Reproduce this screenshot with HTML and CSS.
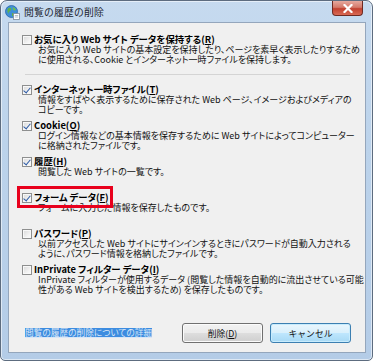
FILE: index.html
```html
<!DOCTYPE html>
<html lang="ja">
<head>
    <meta charset="UTF-8">
    <title>閲覧の履歴の削除</title>
    <link rel="stylesheet" href="styles.css">
</head>
<body>
    <div class="window">
        <div class="titlebar">
            <svg class="app-icon" width="15" height="15" viewBox="0 0 15 15">
                <circle cx="6.5" cy="6.5" r="6" fill="#3f8fd8" stroke="#2866a8" stroke-width="0.8"/>
                <path d="M2.5 4 Q4 2 6 3 Q7 5 5 6 Q3 7 3.5 9 Q2 7 2.5 4Z" fill="#5fb34a"/>
                <path d="M7.5 2 Q10 2.5 11 5 Q9 6 8 4.5Z" fill="#6cc04f"/>
                <path d="M7 8 Q9 7.5 10 9.5 Q8.5 11.5 7 11Z" fill="#5fb34a"/>
                <rect x="8.5" y="8.5" width="6" height="6" fill="#fff" stroke="#7d8a99" stroke-width="0.8"/>
                <path d="M9.8 10.5h3.4M9.8 12h3.4" stroke="#9aa7b5" stroke-width="0.7"/>
            </svg>
            <span class="title">閲覧の履歴の削除</span>
            <div class="close">
                <svg width="10" height="9" viewBox="0 0 10 9">
                    <path d="M1.5 1 L8.5 8 M8.5 1 L1.5 8" stroke="#fff" stroke-width="2.2" stroke-linecap="square"/>
                </svg>
            </div>
        </div>

        <div class="panel">
            <div class="options">
                <div class="option first">
                    <div class="opt-head"><span class="box"></span><span class="label">お気に入り Web サイト データを保持する(<u>R</u>)</span></div>
                    <div class="desc">お気に入り Web サイトの基本設定を保持したり、ページを素早く表示したりするため<br>に使用される、Cookie とインターネット一時ファイルを保持します。</div>
                </div>
                <div class="sep"></div>
                <div class="option">
                    <div class="opt-head"><span class="box checked"></span><span class="label">インターネット一時ファイル(<u>T</u>)</span></div>
                    <div class="desc">情報をすばやく表示するために保存された Web ページ、イメージおよびメディアの<br>コピーです。</div>
                </div>
                <div class="option">
                    <div class="opt-head"><span class="box checked"></span><span class="label">Cookie(<u>O</u>)</span></div>
                    <div class="desc">ログイン情報などの基本情報を保存するために Web サイトによってコンピューター<br>に格納されたファイルです。</div>
                </div>
                <div class="option">
                    <div class="opt-head"><span class="box checked"></span><span class="label">履歴(<u>H</u>)</span></div>
                    <div class="desc">閲覧した Web サイトの一覧です。</div>
                </div>
                <div class="option">
                    <div class="opt-head"><span class="box checked"></span><span class="label">フォーム データ(<u>F</u>)</span></div>
                    <div class="desc">フォームに入力した情報を保存したものです。</div>
                    <div class="marker"></div>
                </div>
                <div class="option">
                    <div class="opt-head"><span class="box"></span><span class="label">パスワード(<u>P</u>)</span></div>
                    <div class="desc">以前アクセスした Web サイトにサインインするときにパスワードが自動入力される<br>ように、パスワード情報を格納したファイルです。</div>
                </div>
                <div class="option">
                    <div class="opt-head"><span class="box"></span><span class="label">InPrivate フィルター データ(<u>I</u>)</span></div>
                    <div class="desc">InPrivate フィルターが使用するデータ (閲覧した情報を自動的に流出させている可能<br>性がある Web サイトを検出するため) を保存したものです。</div>
                </div>
            </div>

            <div class="footer">
                <a class="more" href="#">閲覧の履歴の削除についての詳細</a>
                <button class="btn">削除(<u>D</u>)</button>
                <button class="btn primary">キャンセル</button>
            </div>
        </div>
    </div>
</body>
</html>
```

FILE: styles.css
```css
html, body {
    margin: 0;
    padding: 0;
}
body {
    width: 373px;
    height: 361px;
    overflow: hidden;
    font-family: "Noto Sans CJK JP", "DejaVu Sans", sans-serif;
    color: #000;
}
.window {
    box-sizing: border-box;
    width: 373px;
    height: 361px;
    border: 1px solid #5d6c7f;
    border-radius: 7px 7px 5px 5px;
    background: linear-gradient(180deg, #c6daef 0%, #bcd3eb 40%, #b4cce7 100%);
    box-shadow: inset 0 0 0 1px rgba(255,255,255,0.55);
    display: flex;
    flex-direction: column;
}
.titlebar {
    height: 21px;
    display: flex;
    align-items: center;
    padding-left: 4px;
}
.app-icon {
    margin-top: 1px;
}
.title {
    margin-left: 4px;
    font-size: 9.8px;
    color: #1b2430;
    letter-spacing: 0.2px;
}
.close {
    margin-left: auto;
    margin-right: 9px;
    align-self: flex-start;
    width: 31px;
    height: 15px;
    box-sizing: border-box;
    border: 1px solid #6e2a22;
    border-top: none;
    border-radius: 0 0 4px 4px;
    background: linear-gradient(180deg, #e6a99e 0%, #d47a6b 45%, #c2402f 55%, #d86a55 100%);
    display: flex;
    align-items: center;
    justify-content: center;
}
.panel {
    margin: 0 6px 7px 7px;
    flex: 1;
    background: #f0f0f0;
    border: 1px solid #94a6bc;
    display: flex;
    flex-direction: column;
}
.options {
    padding: 11px 0 0 13px;
}
.option {
    position: relative;
    margin-bottom: 5px;
}
.option.first {
    margin-bottom: 0;
}
.opt-head {
    display: flex;
    align-items: center;
    height: 11px;
}
.box {
    box-sizing: border-box;
    width: 10px;
    height: 10px;
    border: 1px solid #8e8f8f;
    background: linear-gradient(135deg, #d9d9d9 0%, #f4f4f4 70%, #fbfbfb 100%);
    box-shadow: inset 0 0 0 1px #f8f8f8;
    margin-right: 2px;
    flex: none;
    position: relative;
}
.box.checked::after {
    content: "";
    position: absolute;
    left: 2px;
    top: 0px;
    width: 3px;
    height: 6px;
    border: solid #2d5ba6;
    border-width: 0 1.5px 1.5px 0;
    transform: rotate(40deg);
}
.label {
    font-size: 9.4px;
    font-weight: bold;
    line-height: 11px;
    white-space: nowrap;
    font-feature-settings: "palt";
}
.desc {
    padding-left: 16px;
    font-size: 9px;
    line-height: 10px;
    min-height: 20px;
    white-space: nowrap;
    font-feature-settings: "palt";
    color: #111;
}
.sep {
    height: 1px;
    background: #d4d4d4;
    margin: 9px 15px 9px 3px;
}
.marker {
    position: absolute;
    left: -5px;
    top: -6px;
    width: 90px;
    height: 16px;
    border: 3px solid #e8001c;
}
.footer {
    margin-top: auto;
    display: flex;
    align-items: center;
    gap: 7px;
    padding: 0 14px 9px 16px;
}
.more {
    font-size: 8.7px;
    line-height: 10px;
    color: #d8e6f7;
    background: #3d8ce0;
    text-decoration: underline;
    white-space: nowrap;
    margin-right: auto;
    font-feature-settings: "palt";
}
.btn {
    width: 81px;
    height: 20px;
    padding: 0;
    font-family: inherit;
    font-size: 8.8px;
    color: #111;
    border: 1px solid #707070;
    border-radius: 3px;
    background: linear-gradient(180deg, #f2f2f2 0%, #ebebeb 48%, #dddddd 52%, #cfcfcf 100%);
    box-shadow: inset 0 0 0 1px #fbfbfb;
}
.btn.primary {
    border-color: #3c7fb1;
    background: linear-gradient(180deg, #eaf6fd 0%, #d9f0fc 48%, #bee6fd 52%, #a7d9f5 100%);
    box-shadow: inset 0 0 0 1px #c8ecfd;
}
```
